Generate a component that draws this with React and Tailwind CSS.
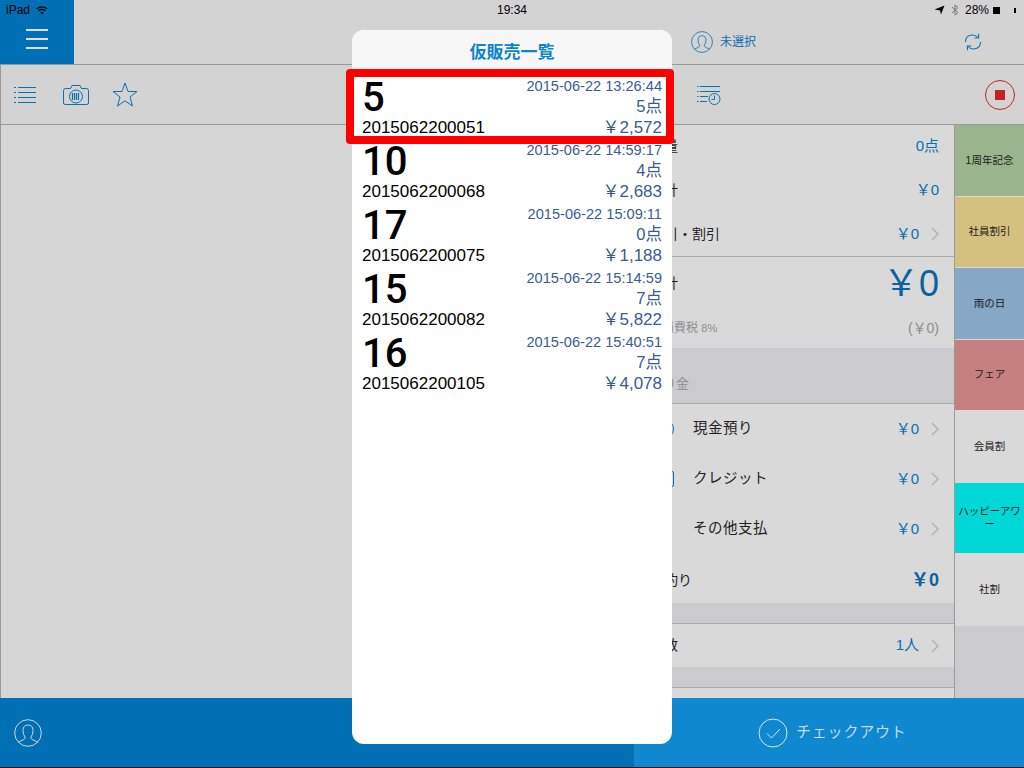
import React from "react";

const FONT = "font-['Liberation_Sans','Noto_Sans_CJK_JP',sans-serif]";
const YEN = "\uFFE5";

const SALES = [
  { num: "5", date: "2015-06-22 13:26:44", qty: "5点", id: "2015062200051", price: YEN + "2,572" },
  { num: "10", date: "2015-06-22 14:59:17", qty: "4点", id: "2015062200068", price: YEN + "2,683" },
  { num: "17", date: "2015-06-22 15:09:11", qty: "0点", id: "2015062200075", price: YEN + "1,188" },
  { num: "15", date: "2015-06-22 15:14:59", qty: "7点", id: "2015062200082", price: YEN + "5,822" },
  { num: "16", date: "2015-06-22 15:40:51", qty: "7点", id: "2015062200105", price: YEN + "4,078" },
];

const TILES = [
  { label: "1周年記念", bg: "bg-[#9ab58d]" },
  { label: "社員割引", bg: "bg-[#d5c17f]" },
  { label: "雨の日", bg: "bg-[#86a7c6]" },
  { label: "フェア", bg: "bg-[#c57f7e]" },
  { label: "会員割", bg: "bg-[#d9d9d9]" },
  { label: "ハッピーアワー", bg: "bg-[#00d8d8]" },
  { label: "社割", bg: "bg-[#d9d9d9]" },
];

function PersonIcon({ className }) {
  return (
    <svg viewBox="0 0 28 28" fill="none" stroke="currentColor" strokeWidth="1" className={className}>
      <circle cx="14" cy="14" r="13.3" />
      <path d="M4.5 23 L10 20.5 Q11.5 19.5 11 18 Q9 15.5 9 11.5 Q9 6 14 6 Q19 6 19 11.5 Q19 15.5 17 18 Q16.5 19.5 18 20.5 L23.5 23" />
    </svg>
  );
}

function Chevron() {
  return (
    <svg width="8" height="14" viewBox="0 0 8 14" fill="none" stroke="#b0b0b0" strokeWidth="1.3" className="ml-[12px] block">
      <path d="M1 1L7 7L1 13" />
    </svg>
  );
}

function ListIcon() {
  return (
    <svg width="22" height="18" viewBox="0 0 22 18" stroke="#0a70b2" strokeWidth="1" className="block">
      {[1, 6, 11, 16].map((y) => (
        <g key={y}>
          <path d="M0 0H2" transform={`translate(0 ${y + 0.5})`} />
          <path d="M4 0H22" transform={`translate(0 ${y + 0.5})`} />
        </g>
      ))}
    </svg>
  );
}

function CameraIcon() {
  return (
    <svg width="26" height="22" viewBox="0 0 26 22" fill="none" stroke="#0a70b2" strokeWidth="1" className="block">
      <path d="M2.5 4.5H7.5L9 1.5H17L18.5 4.5H23.5Q25.5 4.5 25.5 6.5V19Q25.5 20.5 23.5 20.5H2.5Q0.5 20.5 0.5 19V6.5Q0.5 4.5 2.5 4.5Z" />
      <circle cx="13" cy="12.5" r="6.5" />
      <path d="M9.5 9V16M11.5 9V16M13.5 9V16M15.5 9V16" strokeWidth="1.2" />
    </svg>
  );
}

function StarIcon() {
  return (
    <svg width="26" height="25" viewBox="0 0 26 25" fill="none" stroke="#0a70b2" strokeWidth="1" className="block">
      <path d="M13 1 L16 9.5 L25 9.5 L18 15 L20.5 24 L13 18.8 L5.5 24 L8 15 L1 9.5 L10 9.5 Z" />
    </svg>
  );
}

function HistoryIcon() {
  return (
    <svg width="25" height="20" viewBox="0 0 25 20" fill="none" stroke="#0a70b2" strokeWidth="1" className="block">
      <path d="M1 1.5H2.5M1 6.5H2.5M1 11.5H2.5M1 16.5H2.5M4 1.5H24M4 6.5H24M4 11.5H12M4 16.5H11" />
      <circle cx="18.5" cy="14" r="5.5" fill="#d3d3d3" />
      <path d="M18.5 10.5V14.5H15.5" />
    </svg>
  );
}

function SyncIcon() {
  return (
    <svg width="18" height="18" viewBox="0 0 18 18" fill="none" stroke="#0a70b2" strokeWidth="1.1" className="block">
      <path d="M1.5 9Q1.5 2.5 8 2Q11.5 1.8 14 4.5" />
      <path d="M16.5 9Q16.5 15.5 10 16Q6.5 16.2 4 13.5" />
      <path d="M14.6 0.8V5H10.6" />
      <path d="M3.4 17.2V13H7.4" />
    </svg>
  );
}

function StatusBar() {
  return (
    <div className={`absolute inset-x-0 top-0 h-5 flex items-center justify-between px-[6px] text-[12px] text-black ${FONT}`}>
      <div className="flex items-center gap-[6px] w-[200px]">
        <span>iPad</span>
        <svg width="12" height="9" viewBox="0 0 12 9" fill="none" stroke="#000" strokeWidth="1.3">
          <path d="M0.8 2.8Q6 -1.2 11.2 2.8M2.6 4.8Q6 2.2 9.4 4.8" />
          <path d="M4.2 6.6Q6 5.4 7.8 6.6L6 8.6Z" fill="#000" stroke="none" />
        </svg>
      </div>
      <span>19:34</span>
      <div className="flex items-center justify-end w-[200px]">
        <svg width="11" height="10" viewBox="0 0 11 10" fill="#000" className="mr-[6px]">
          <path d="M0.5 4.5L10.5 0.5L7 9.5L6 5.5Z" />
        </svg>
        <svg width="8" height="12" viewBox="0 0 8 12" fill="none" stroke="#777" className="mr-[6px]">
          <path d="M1 3L7 8.5L4 11V1L7 3.5L1 9" />
        </svg>
        <span>28%</span>
        <span className="ml-[4px] w-[7px] h-[7px] bg-black" />
        <span className="ml-[14px] mr-[2px] w-[2px] h-[5px] bg-black" />
      </div>
    </div>
  );
}

function Row({ label, value, arrow, h = "h-[44px]" }) {
  return (
    <div className={`flex items-center justify-between pl-4 pr-[15px] ${h}`}>
      <span className="text-[14px] text-[#1f1f1f]">{label}</span>
      <span className="flex items-center">
        <span className="text-[15px] text-[#0a70b2]">{value}</span>
        {arrow && <Chevron />}
      </span>
    </div>
  );
}

function PayRow({ label, value, icon }) {
  return (
    <div className="flex items-center h-[50px] pl-4 pr-[15px]">
      <span className="w-[27px] h-[22px] mr-[16px] flex items-center justify-center text-[#0a70b2]">{icon}</span>
      <span className="text-[14.5px] text-[#1f1f1f] tracking-[0.5px]">{label}</span>
      <span className="ml-auto text-[15px] text-[#0a70b2]">{value}</span>
      <Chevron />
    </div>
  );
}

function SaleRow({ sale }) {
  return (
    <div className="h-[64px] flex justify-between px-[10px]">
      <div className="flex flex-col text-black">
        <span className="font-['Roboto'] text-[40px] font-medium leading-[48px] h-[43px]">{sale.num}</span>
        <span className="text-[17px] leading-[21px]">{sale.id}</span>
      </div>
      <div className="flex flex-col items-end text-[#3a5b94]">
        <span className="text-[14.6px] leading-[21px] h-[20px] mt-[2px]">{sale.date}</span>
        <span className="text-[16.5px] leading-[21px]">{sale.qty}</span>
        <span className="text-[17px] leading-[21px]">{sale.price}</span>
      </div>
    </div>
  );
}

export default function App() {
  return (
    <div className={`relative w-[1024px] h-[768px] overflow-hidden flex flex-col bg-[#d6d6d6] ${FONT}`}>
      <header className="h-[65px] flex items-stretch bg-[#d3d3d3] border-b border-[#999999]">
        <div className="w-[74px] bg-[#006fb3] flex flex-col items-center justify-end pb-[15px] gap-[7px]">
          <span className="w-[22px] h-[2px] bg-[#dddddd]" />
          <span className="w-[22px] h-[2px] bg-[#dddddd]" />
          <span className="w-[22px] h-[2px] bg-[#dddddd]" />
        </div>
        <div className="flex-1 flex items-center pt-[20px] pl-[617px] pr-[42px]">
          <PersonIcon className="w-[22px] h-[22px] text-[#0a70b2]" />
          <span className="ml-[7px] text-[12px] text-[#0a70b2]">未選択</span>
          <span className="ml-auto"><SyncIcon /></span>
        </div>
      </header>

      <div className="h-[60px] flex items-center bg-[#d3d3d3] border-b border-l border-[#999999] pl-[13px] pr-[9px]">
        <ListIcon />
        <div className="ml-[27px]"><CameraIcon /></div>
        <div className="ml-[23px]"><StarIcon /></div>
        <div className="ml-[558px]"><HistoryIcon /></div>
        <div className="ml-auto w-[30px] h-[30px] rounded-full border border-[#c42026] flex items-center justify-center">
          <span className="w-[10px] h-[10px] bg-[#c42026]" />
        </div>
      </div>

      <main className="flex-1 flex min-h-0 border-l border-[#999999]">
        <div className="w-[633px] bg-[#d6d6d6]" />
        <div className="w-[320px] flex flex-col bg-[#d9d9d9]">
          <Row label="数量" value="0点" h="h-[43px]" />
          <Row label="小計" value={YEN + "0"} />
          <Row label="値引・割引" value={YEN + "0"} arrow />
          <div className="h-[92px] border-t border-[#aaaaaa] flex flex-col">
            <div className="flex-1 flex items-center justify-between pl-4 pr-[15px]">
              <span className="text-[14px] text-[#1f1f1f]">合計</span>
              <span className="text-[36px] leading-none text-[#0a639f]">{YEN}0</span>
            </div>
            <div className="h-[38px] flex items-center justify-between pl-4 pr-[15px] pb-[2px] text-[#8c8c8c]">
              <span className="text-[12px]">内消費税 <span className="text-[11px]">8%</span></span>
              <span className="text-[14px]">({YEN}0)</span>
            </div>
          </div>
          <div className="h-[56px] bg-[#cbcbcf] border-b border-[#aaaaaa] flex items-end pl-4 pb-[10px]">
            <span className="text-[13px] text-[#8c8c8c]">預り金</span>
          </div>
          <PayRow label="現金預り" value={YEN + "0"} icon={<span className="w-[20px] h-[20px] rounded-full border border-current" />} />
          <PayRow label="クレジット" value={YEN + "0"} icon={<span className="w-[20px] h-[16px] rounded-[2px] border border-current" />} />
          <PayRow label="その他支払" value={YEN + "0"} />
          <div className="h-[49px] flex items-center justify-between pl-4 pr-[15px] pt-[3px]">
            <span className="text-[14px] text-[#1f1f1f]">お釣り</span>
            <span className="text-[18px] font-bold text-[#0a639f]">{YEN}0</span>
          </div>
          <div className="h-[21px] bg-[#cbcbcf] border-b border-[#aaaaaa]" />
          <Row label="人数" value="1人" arrow h="h-[43px]" />
          <div className="h-[21px] bg-[#cbcbcf] border-b border-[#aaaaaa]" />
          <div className="flex-1" />
        </div>
        <aside className="w-[70px] flex flex-col bg-[#cbcbcf] border-l border-[#999999]">
          {TILES.map((t) => (
            <div key={t.label} className={`h-[71.5px] flex items-center justify-center text-center text-[10.5px] leading-[13px] text-[#1a1a1a] border-b border-[#d9d9d9] ${t.bg}`}>
              {t.label}
            </div>
          ))}
        </aside>
      </main>

      <footer className="h-[70px] flex border-b border-black">
        <div className="w-[634px] bg-[#006fb3] flex items-center pl-[14px]">
          <PersonIcon className="w-[28px] h-[28px] text-[#d5d5d5]" />
        </div>
        <div className="flex-1 bg-[#0f88cf] flex items-center pl-[124px]">
          <svg width="30" height="30" viewBox="0 0 30 30" fill="none" stroke="#d9e6ee" strokeWidth="1">
            <circle cx="15" cy="15" r="14" />
            <path d="M9 15.5L13.5 20L22 11" />
          </svg>
          <span className="ml-[8px] text-[15px] tracking-[0.8px] text-[#c6dbe8]">チェックアウト</span>
        </div>
      </footer>

      <StatusBar />

      <div className="absolute left-[352px] top-[30px] w-[320px] h-[714px] rounded-[12px] bg-white overflow-hidden">
        <div className="h-[44px] bg-[#f7f7f7] flex items-center justify-center pt-[1px] text-[17px] font-bold text-[#0a86cc]">
          仮販売一覧
        </div>
        {SALES.map((s) => (
          <SaleRow key={s.id} sale={s} />
        ))}
      </div>
      <div className="absolute left-[346px] top-[69px] w-[328px] h-[75px] rounded-[4px] border-[8px] border-[#ff0000]" />
    </div>
  );
}
